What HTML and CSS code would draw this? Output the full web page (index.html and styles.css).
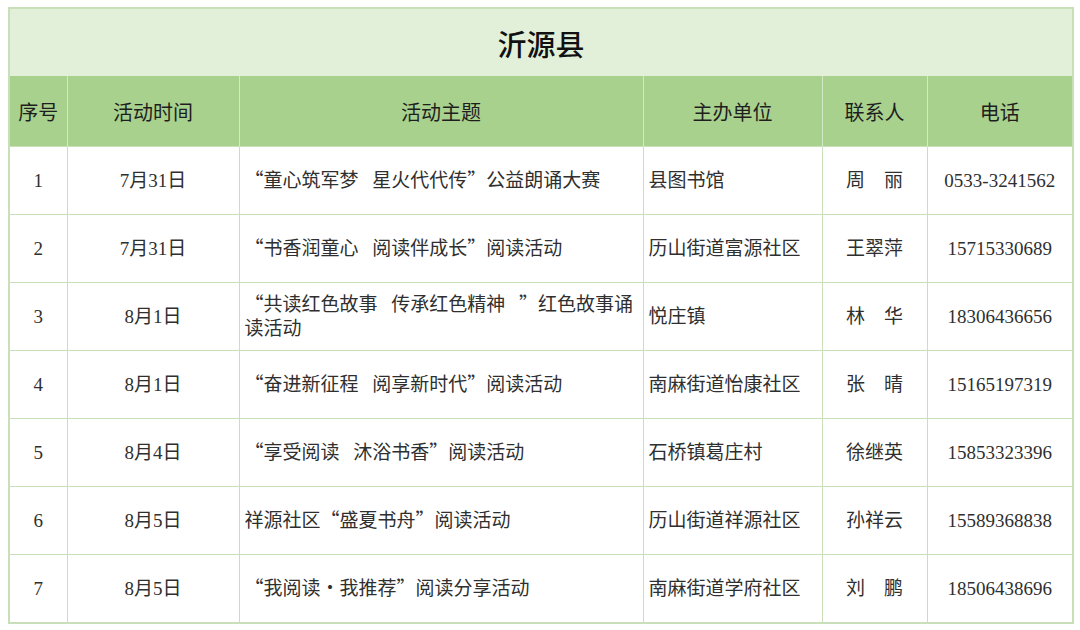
FILE: index.html
```html
<!DOCTYPE html>
<html lang="zh-CN">
<head>
<meta charset="utf-8">
<title>沂源县</title>
<link rel="stylesheet" href="styles.css">
</head>
<body>
<table class="sheet">
  <colgroup>
    <col class="c-no">
    <col class="c-date">
    <col class="c-topic">
    <col class="c-org">
    <col class="c-person">
    <col class="c-phone">
  </colgroup>
  <thead>
    <tr class="title-row"><th colspan="6" class="title">沂源县</th></tr>
    <tr class="head-row">
      <th>序号</th><th>活动时间</th><th>活动主题</th><th>主办单位</th><th>联系人</th><th>电话</th>
    </tr>
  </thead>
  <tbody>
    <tr><td class="ctr">1</td><td class="ctr">7月31日</td><td class="lft">“童心筑军梦&ensp; 星火代代传”公益朗诵大赛</td><td class="lft">县图书馆</td><td class="ctr">周&emsp;丽</td><td class="ctr">0533-3241562</td></tr>
    <tr><td class="ctr">2</td><td class="ctr">7月31日</td><td class="lft">“书香润童心&ensp; 阅读伴成长”阅读活动</td><td class="lft">历山街道富源社区</td><td class="ctr">王翠萍</td><td class="ctr">15715330689</td></tr>
    <tr><td class="ctr">3</td><td class="ctr">8月1日</td><td class="lft">“共读红色故事&ensp; 传承红色精神&ensp; ”红色故事诵读活动</td><td class="lft">悦庄镇</td><td class="ctr">林&emsp;华</td><td class="ctr">18306436656</td></tr>
    <tr><td class="ctr">4</td><td class="ctr">8月1日</td><td class="lft">“奋进新征程&ensp; 阅享新时代”阅读活动</td><td class="lft">南麻街道怡康社区</td><td class="ctr">张&emsp;晴</td><td class="ctr">15165197319</td></tr>
    <tr><td class="ctr">5</td><td class="ctr">8月4日</td><td class="lft">“享受阅读&ensp; 沐浴书香”阅读活动</td><td class="lft">石桥镇葛庄村</td><td class="ctr">徐继英</td><td class="ctr">15853323396</td></tr>
    <tr><td class="ctr">6</td><td class="ctr">8月5日</td><td class="lft">祥源社区“盛夏书舟”阅读活动</td><td class="lft">历山街道祥源社区</td><td class="ctr">孙祥云</td><td class="ctr">15589368838</td></tr>
    <tr><td class="ctr">7</td><td class="ctr">8月5日</td><td class="lft">“我阅读・我推荐”阅读分享活动</td><td class="lft">南麻街道学府社区</td><td class="ctr">刘&emsp;鹏</td><td class="ctr">18506438696</td></tr>
  </tbody>
</table>
</body>
</html>
```

FILE: styles.css
```css
html, body {
  margin: 0;
  padding: 0;
  background: #ffffff;
}

body {
  padding: 7px 0 0 8px;
  font-family: "Liberation Serif", "Noto Sans CJK SC", serif;
  color: #333333;
}

.sheet {
  border-collapse: collapse;
  table-layout: fixed;
  width: 1064px;
  border: 2px solid #c9dfb9;
}

.c-no { width: 58px; }
.c-date { width: 172px; }
.c-topic { width: 404px; }
.c-org { width: 179px; }
.c-person { width: 105px; }
.c-phone { width: 146px; }

.title-row th {
  height: 67px;
  background: #e2efd9;
  font-family: "Noto Sans CJK SC", sans-serif;
  font-size: 29px;
  font-weight: 500;
  color: #111111;
  text-align: center;
  padding: 0;
  border-bottom: none;
}

.head-row th {
  height: 70px;
  background: #a9d18e;
  font-family: "Noto Sans CJK SC", sans-serif;
  font-size: 20px;
  font-weight: 400;
  color: #1e1e1e;
  text-align: center;
  padding: 0;
  border-left: 1px solid #d4eac6;
  border-right: 1px solid #d4eac6;
}

.sheet td {
  height: 67px;
  font-size: 19px;
  line-height: 24px;
  border: 1px solid #c9dfb9;
  padding: 0 5px;
  color: #2f2f2f;
}

.ctr { text-align: center; }

.lft {
  text-align: left;
  font-family: "Noto Sans CJK SC", sans-serif;
}

.sheet td.lft {
  height: 64px;
  padding-bottom: 3px;
}
```
